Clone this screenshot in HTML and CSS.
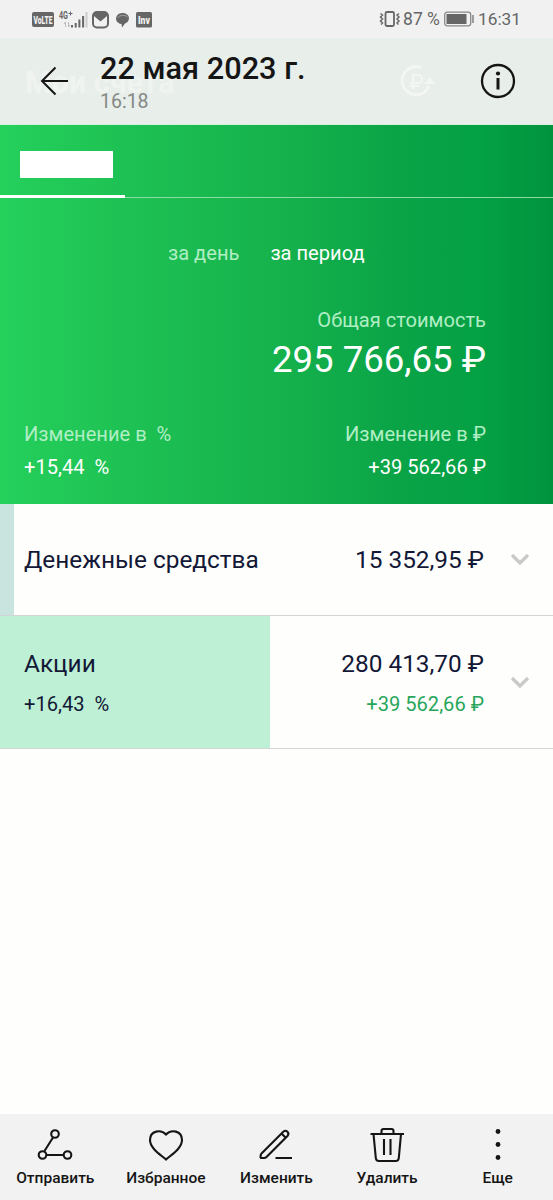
FILE: index.html
```html
<!DOCTYPE html>
<html lang="ru">
<head>
    <meta charset="UTF-8">
    <title>Мои счета</title>
    <link rel="stylesheet" href="styles.css">
</head>
<body>

<div class="screen">

    <div class="status">
        <svg class="status-icons" width="125" height="24" viewBox="0 0 125 24">
            <rect x="0" y="5" width="22" height="15" rx="2" fill="#666"/>
            <text class="volte" x="1.500" y="16.500" textLength="19" lengthAdjust="spacingAndGlyphs">VoLTE</text>
            <text class="net" x="27" y="12" textLength="9" lengthAdjust="spacingAndGlyphs">4G</text>
            <path d="M36.500 6.500h4M38.500 4.500v4" stroke="#666"/>
            <path d="M33.500 20v-5l-1.500 2M36.500 15v5l1.500-2" stroke="#bbb" fill="none"/>
            <path d="M40 18v2.500M43.700 16v4.500M47.400 12.500v8M51.100 9v11.500" stroke="#666" stroke-width="2"/>
            <path d="M54.500 5v15.500" stroke="#ccc" stroke-width="2"/>
            <rect x="61" y="5" width="15" height="15.500" rx="4" fill="none" stroke="#666" stroke-width="2"/>
            <path d="M62 5h13v4l-6.500 5.500L62 9z" fill="#666"/>
            <path d="M84.500 9.500c2-5 12-4.500 12.500 1.500 0 3-2 5-4 5.500l-3 4-.5-3.500c-4.500-.5-6.500-4.500-5-7.500z" fill="#666"/>
            <path d="M85.500 11c2-3 7.500-3.500 10-1" fill="none" stroke="#bbb" stroke-width=".7"/>
            <rect x="104" y="5" width="16" height="15.500" rx="1.500" fill="#666"/>
            <text class="volte" x="106" y="16.500" textLength="12" lengthAdjust="spacingAndGlyphs">Inv</text>
        </svg>
        <div class="status-right">
            <svg width="22" height="18" viewBox="0 0 22 18" fill="none" stroke="#666">
                <rect x="6.500" y="2" width="8.500" height="14" rx="1.500" stroke-width="1.800"/>
                <path d="M1.500 3.500l2 1.500-2 2 2 2-2 2 2 2-1.500 1.500M20 3.500L18 5l2 2-2 2 2 2-2 2 1.500 1.500" stroke-width="1.500"/>
            </svg>
            <span class="percent">87 %</span>
            <svg width="30" height="16" viewBox="0 0 30 16">
                <rect x=".7" y="1.200" width="26" height="13.600" rx="2.500" fill="none" stroke="#888" stroke-width="1.300"/>
                <rect x="2.500" y="3" width="20" height="10" fill="#666"/>
                <path d="M29 4v8" stroke="#888" stroke-width="1.600"/>
            </svg>
            <span class="clock">16:31</span>
        </div>
    </div>

    <div class="header">
        <div class="ghost-title">Мои счета</div>
        <svg class="ghost-ruble" width="36" height="34" viewBox="0 0 36 34" fill="none" stroke="#f3f6f4">
            <path d="M22 2.500A14 14 0 1 0 30 21" stroke-width="3"/>
            <path d="M25 19l6-7 5 7z" fill="#f3f6f4" stroke="none"/>
            <path d="M14 24V10h5a4 4 0 0 1 0 8h-8M11 21h9" stroke-width="2.200"/>
        </svg>
        <svg class="back" width="30" height="30" viewBox="0 0 30 30" fill="none" stroke="#151515" stroke-width="2">
            <path d="M28 15H2M15.500 1.500L2 15l13.500 13.500"/>
        </svg>
        <div class="date">
            <div class="day">22 мая 2023 г.</div>
            <div class="hour">16:18</div>
        </div>
        <svg class="info" width="36" height="36" viewBox="0 0 36 36">
            <circle cx="18" cy="18" r="16" fill="none" stroke="#151515" stroke-width="2.300"/>
            <circle cx="18" cy="10.500" r="2.100" fill="#151515"/>
            <path d="M18 15v11.500" stroke="#151515" stroke-width="3"/>
        </svg>
    </div>

    <div class="summary">
        <div class="tabs">
            <div class="tab"><div class="account"></div></div>
        </div>
        <div class="period">
            <span class="muted">за день</span>
            <span>за период</span>
        </div>
        <div class="total">
            <div class="muted total-label">Общая стоимость</div>
            <div class="total-sum">295 766,65 ₽</div>
        </div>
        <div class="changes">
            <div>
                <div class="muted">Изменение в &nbsp;%</div>
                <div class="change-percent">+15,44 &nbsp;%</div>
            </div>
            <div class="right">
                <div class="muted change-rub">Изменение в ₽</div>
                <div class="change-sum">+39 562,66 ₽</div>
            </div>
        </div>
    </div>

    <div class="row cash">
        <div class="name">Денежные средства</div>
        <div class="money right">
            <div class="sum">15 352,95 ₽</div>
        </div>
        <svg class="chevron" width="20" height="14" viewBox="0 0 20 14"><path d="M2 2l8 8 8-8"/></svg>
    </div>

    <div class="row stocks">
        <div class="name">
            Акции
            <div class="small">+16,43 &nbsp;%</div>
        </div>
        <div class="money right">
            <div class="sum">280 413,70 ₽</div>
            <div class="small profit">+39 562,66 ₽</div>
        </div>
        <svg class="chevron" width="20" height="14" viewBox="0 0 20 14"><path d="M2 2l8 8 8-8"/></svg>
    </div>

    <div class="toolbar">
        <div class="tool">
            <svg width="36" height="36" viewBox="0 0 36 36">
                <path d="M7.500 22L16 8.500M9.500 26h17"/>
                <circle cx="18" cy="5" r="3.800"/><circle cx="5.500" cy="26" r="3.800"/><circle cx="30.500" cy="26" r="3.800"/>
            </svg>
            <div>Отправить</div>
        </div>
        <div class="tool">
            <svg width="36" height="36" viewBox="0 0 36 36">
                <path d="M18 30.500C13 26 2 19.500 2 11 2 1.500 13 0 18 5.500 23 0 34 1.500 34 11 34 19.500 23 26 18 30.500z"/>
            </svg>
            <div>Избранное</div>
        </div>
        <div class="tool">
            <svg width="36" height="36" viewBox="0 0 36 36">
                <path d="M3.500 24.500L25.500 2.500a3 3 0 0 1 4.200 4.200L8.500 28Q7.500 29 6 29H3.500Q2.500 29 2.500 28L2.800 26Q2.900 25 3.500 24.500z"/>
                <path d="M23.500 4.500l4.200 4.200M17.500 29H34"/>
            </svg>
            <div>Изменить</div>
        </div>
        <div class="tool">
            <svg width="36" height="36" viewBox="0 0 36 36">
                <path d="M1.500 5h33.500M12.500 4.500V2q0-2 2-2h8q2 0 2 2v2.500M4.500 5l2.300 24q.3 3 3 3h17q2.700 0 3-3L32 5M15 10v16M21.500 10v16"/>
            </svg>
            <div>Удалить</div>
        </div>
        <div class="tool">
            <svg width="36" height="36" viewBox="0 0 36 36">
                <g class="dots"><circle cx="18" cy="2.500" r="2.400"/><circle cx="18" cy="15.500" r="2.400"/><circle cx="18" cy="28.500" r="2.400"/></g>
            </svg>
            <div>Еще</div>
        </div>
    </div>

</div>

</body>
</html>
```
FILE: styles.css
```css
* {
    box-sizing: border-box;
}

body {
    margin: 0;
    font-family: Roboto, sans-serif;
    background-color: #fefefd;
}

.screen {
    width: 553px;
    height: 1200px;
    display: flex;
    flex-direction: column;
    overflow: hidden;
}

.status {
    height: 38px;
    display: flex;
    justify-content: space-between;
    align-items: center;
    padding: 0 32px 0 32px;
    background-color: #f1f1f1;
    color: #666;
}

.status-right {
    display: flex;
    align-items: center;
    font-size: 18px;
}

.status-right svg {
    flex: none;
}

.percent {
    margin-left: 2px;
    margin-right: 4px;
    font-size: 17.5px;
    white-space: nowrap;
}

.clock {
    margin-left: 4px;
    font-size: 17.3px;
}

.volte {
    font-size: 10px;
    font-weight: 900;
    fill: #f1f1f1;
}

.net {
    font-size: 10px;
    font-weight: 700;
    fill: #666;
}

.header {
    position: relative;
    height: 87px;
    display: flex;
    padding-left: 40px;
    padding-right: 37px;
    background-color: #e8eeea;
    border-bottom: 1px solid #d5f0dc;
}

/* title of the app showing through the translucent bar */
.ghost-title {
    position: absolute;
    left: 25px;
    top: 27px;
    font-size: 30.5px;
    font-weight: 700;
    line-height: 36px;
    color: #f0f4f1;
}

.ghost-ruble {
    position: absolute;
    left: 399px;
    top: 27px;
}

.back {
    position: relative;
    margin-top: 28px;
}

.date {
    position: relative;
    margin-left: 30px;
    padding-top: 12px;
    flex: 1;
}

.day {
    font-size: 30.7px;
    font-weight: 500;
    line-height: 38px;
    color: #151515;
}

.hour {
    font-size: 19.5px;
    line-height: 28px;
    color: #858886;
}

.info {
    margin-top: 25px;
}

.summary {
    height: 379px;
    background: linear-gradient(90deg, #25d05b 0%, #1dc053 25%, #16b24c 50%, #0aa447 72%, #04a044 87%, #00933e 100%);
    color: #fff;
    font-size: 20.1px;
    line-height: 24px;
}

.muted {
    color: #b0eec4;
}

.right {
    text-align: right;
}

.tabs {
    height: 73px;
    border-bottom: 1px solid #8cdaa4;
}

.tab {
    width: 125px;
    height: 73px;
    padding: 26px 0 0 20px;
    border-bottom: 3px solid #fff;
}

.account {
    width: 93px;
    height: 27px;
    background-color: #fff;
}

.period {
    display: flex;
    gap: 31px;
    padding: 43px 0 0 168px;
}

.total {
    padding: 43px 67px 0 0;
    text-align: right;
}

.total-sum {
    font-size: 36.6px;
    line-height: 44px;
    margin-top: 6px;
}

.changes {
    display: flex;
    justify-content: space-between;
    padding: 40px 67px 0 24px;
}

.change-percent,
.change-sum {
    margin-top: 9px;
}

.row {
    display: flex;
    align-items: center;
    justify-content: space-between;
    padding: 1px 23px 0 24px;
    border-bottom: 1px solid #d3d4d6;
    color: #131836;
    font-size: 24.4px;
    line-height: 30px;
}

.cash {
    height: 112px;
    background: linear-gradient(to right, #c9e4df 14px, #fefefd 14px);
}

.stocks {
    height: 133px;
    background: linear-gradient(to right, #bdf0d5 270px, #fefefd 270px);
}

.money {
    flex: 1;
    margin-right: 26px;
}

.small {
    font-size: 20.1px;
    line-height: 24px;
    margin-top: 13px;
}

.profit {
    color: #27a65b;
}

.chevron {
    fill: none;
    stroke: #c9c9c9;
    stroke-width: 3.2;
}

.toolbar {
    height: 86px;
    margin-top: auto;
    display: flex;
    background-color: #f2f2f2;
    color: #151515;
}

.tool {
    flex: 1;
    padding-top: 15px;
    text-align: center;
    font-size: 15.5px;
    font-weight: 500;
    line-height: 20px;
}

.tool svg {
    display: block;
    margin: 0 auto 3px;
    overflow: visible;
    fill: none;
    stroke: #151515;
    stroke-width: 2.1;
}

.tool .dots {
    fill: #151515;
    stroke: none;
}
```
